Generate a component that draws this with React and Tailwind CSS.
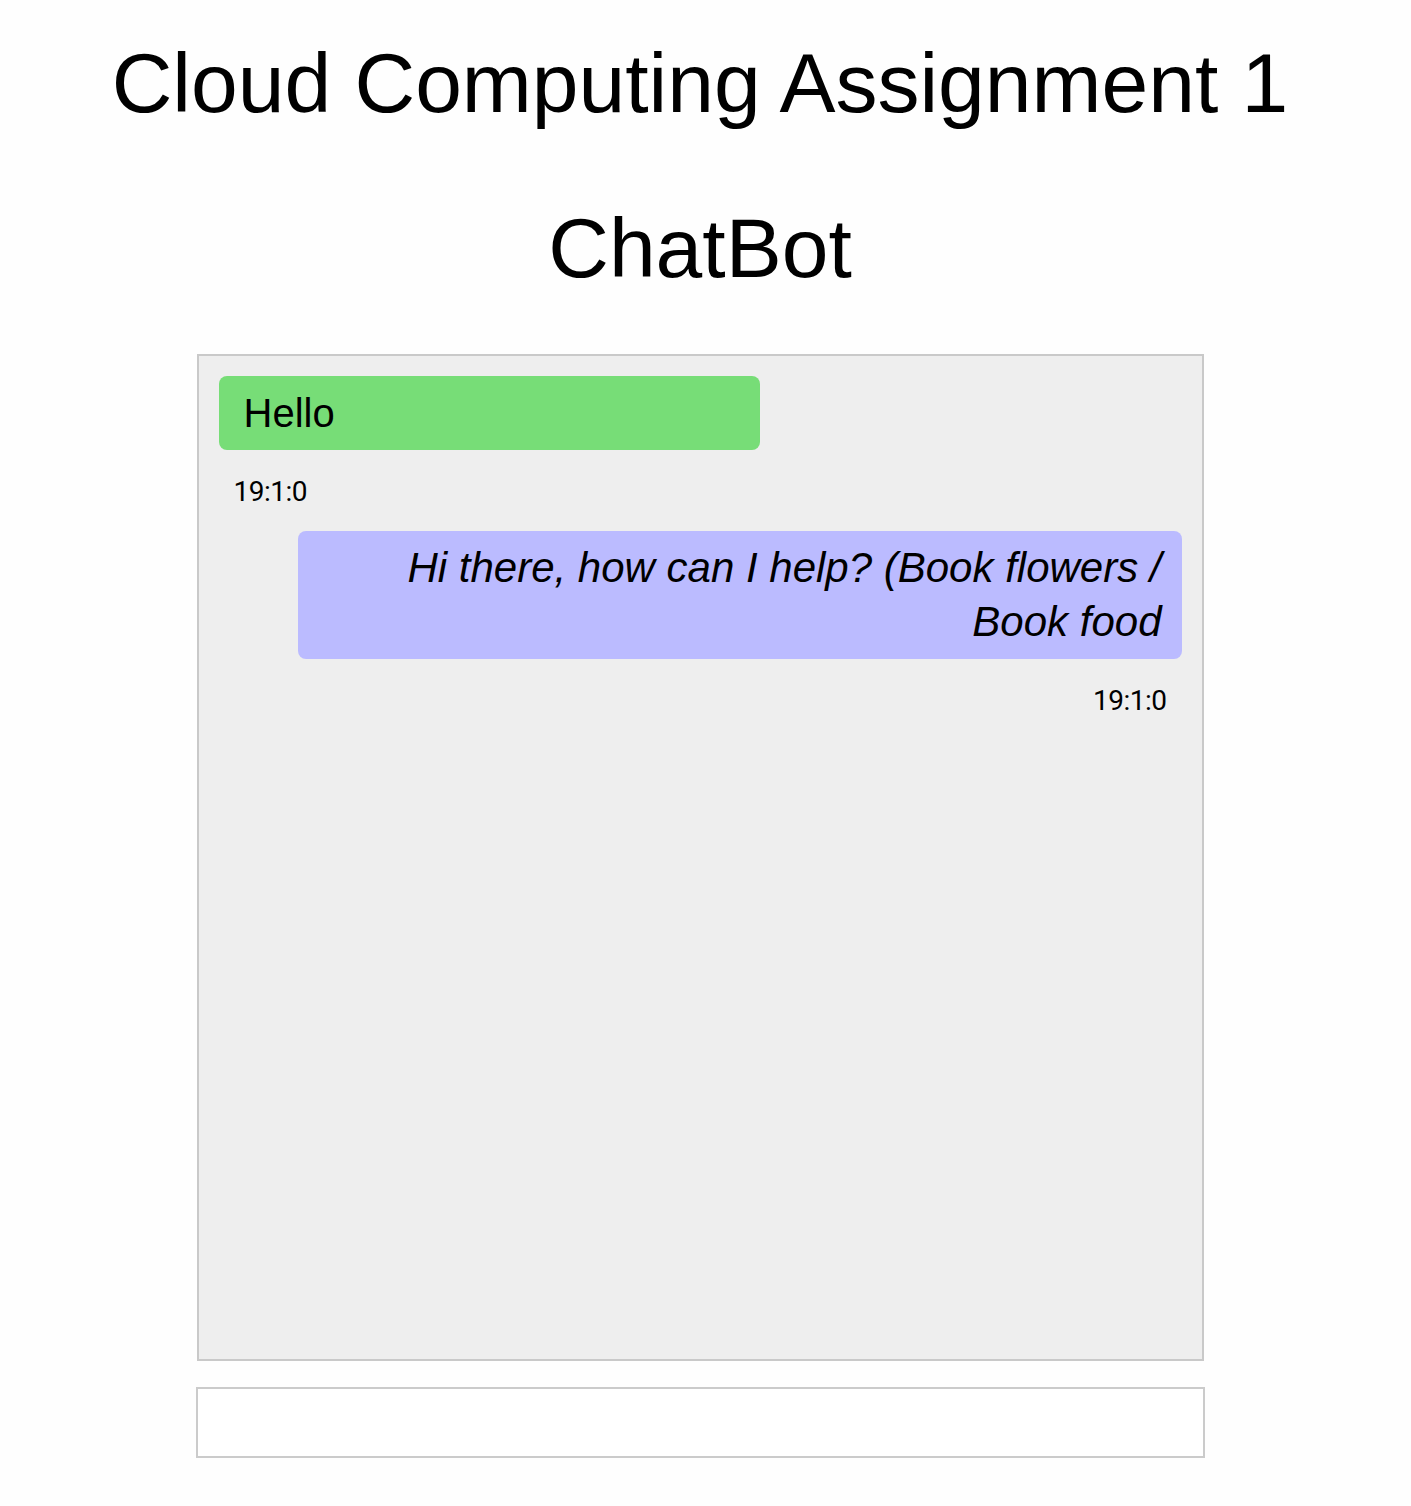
const messages = [
    { from: 'user', text: 'Hello', time: '19:1:0' },
    { from: 'bot', text: 'Hi there, how can I help? (Book flowers / Book food', time: '19:1:0' },
];

function Message({ msg }) {
    const isBot = msg.from === 'bot';
    return (
        <div className={isBot ? 'flex flex-col items-end' : 'flex flex-col items-start'}>
            {isBot ? (
                <div className="w-[884px] rounded-[8px] bg-[#bbbbff] px-[20px] py-[10px] text-right text-[42px] italic leading-[54px] text-black">
                    {msg.text}
                </div>
            ) : (
                <div className="w-[541px] rounded-[8px] bg-[#77dd77] px-[25px] py-[10px] text-[40px] leading-[54px] text-black">
                    {msg.text}
                </div>
            )}
            <div className="mt-[24px] mb-[21px] px-[15px] font-['Roboto',sans-serif] text-[28px] leading-[36px] tracking-[-0.5px] text-black">
                {msg.time}
            </div>
        </div>
    );
}

export default function App() {
    return (
        <div className="min-h-[1506px] w-full bg-[#fefefe] font-['Liberation_Sans',Arial,sans-serif] text-black">
            <div className="flex w-[1400px] flex-col items-center">
                <h1 className="mt-[41px] text-[84px] font-normal leading-[84px]">Cloud Computing Assignment 1</h1>
                <h1 className="mt-[81px] text-[84px] font-normal leading-[84px]">ChatBot</h1>

                {/* conversation */}
                <div className="mt-[64px] h-[1007px] w-[1007px] border-2 border-[#c9c9c9] bg-[#eeeeee] p-[20px]">
                    {messages.map((m, i) => <Message key={i} msg={m} />)}
                </div>

                <input
                    type="text"
                    className="mt-[26px] h-[71px] w-[1009px] border-2 border-[#cbcbcb] bg-white px-3 text-[28px] outline-none"
                />
            </div>
        </div>
    );
}
